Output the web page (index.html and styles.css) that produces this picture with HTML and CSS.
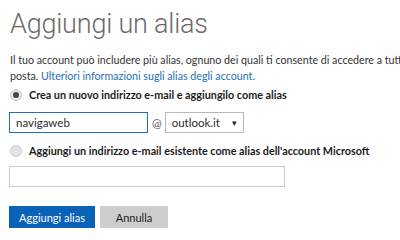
FILE: index.html
```html
<!DOCTYPE html>
<html lang="it">
<head>
  <meta charset="UTF-8"><title>Aggiungi un alias</title>
  <link rel="stylesheet" href="styles.css">
</head>
<body>
  <div class="page">
    <h1>Aggiungi un alias</h1>
    <p class="intro">Il tuo account può includere più alias, ognuno dei quali ti consente di accedere a tutti i servizi della<br>posta. <a href="#">Ulteriori informazioni sugli alias degli account.</a></p>

    <label class="option first">
      <span class="radio checked"></span>
      <span>Crea un nuovo indirizzo e-mail e aggiungilo come alias</span>
    </label>
    <div class="new-row">
      <div class="field focus">navigaweb</div>
      <span class="at">@</span>
      <div class="select">outlook.it <span class="caret">▾</span></div>
    </div>

    <label class="option">
      <span class="radio"></span>
      <span>Aggiungi un indirizzo e-mail esistente come alias dell'account Microsoft</span>
    </label>
    <div class="field wide"></div>

    <div class="actions">
      <button class="btn primary">Aggiungi alias</button>
      <button class="btn">Annulla</button>
    </div>
  </div>
</body>
</html>
```

FILE: styles.css
```css
* { margin:0; padding:0; box-sizing:border-box; }
body { background:#fff; font-family:Lato,sans-serif; color:#2b2b2b; overflow:hidden; }

.page { padding:6px 0 0 10px; }
h1 { font-family:Roboto,sans-serif; font-weight:300; font-size:27px; color:#6b6b6b; letter-spacing:-.2px; line-height:36px; }

.intro { font-size:10.7px; line-height:16px; margin-top:10px; white-space:nowrap; color:#333; }
.intro a { color:#1e6fb3; text-decoration:none; }

.option { display:flex; align-items:center; gap:7px; font-size:10.8px; font-weight:700; color:#1c1c1c; }
.option.first { margin-top:4px; }
.radio { width:12px; height:12px; border-radius:50%; background:#e3e3e3; border:1px solid #cfcfcf; display:flex; align-items:center; justify-content:center; }
.radio.checked::after { content:''; width:6px; height:6px; border-radius:50%; background:#444; }

.new-row { display:flex; align-items:center; margin:11px 0 11px -1px; }
.field { height:21px; border:1px solid #c9c9c9; font-size:11.5px; padding:0 6px; line-height:19px; }
.field.focus { width:139px; border-color:#1a6fc4; }
.field.wide { width:276px; margin:9px 0 0 -1px; }
.at { font-size:11.5px; color:#555; margin:0 3px 0 4px; }
.select { width:79px; height:21px; border:1px solid #b8b8b8; font-size:11.5px; line-height:19px; padding:0 6px; display:flex; justify-content:space-between; }
.caret { font-size:9px; color:#222; }

.actions { display:flex; gap:5px; margin:19px 0 0 -1px; }
.btn { height:22px; font-family:Lato,sans-serif; font-size:11px; border:none; background:#cdcdcd; color:#222; width:68px; }
.btn.primary { background:#0a63b6; color:#fff; width:86px; }
```
